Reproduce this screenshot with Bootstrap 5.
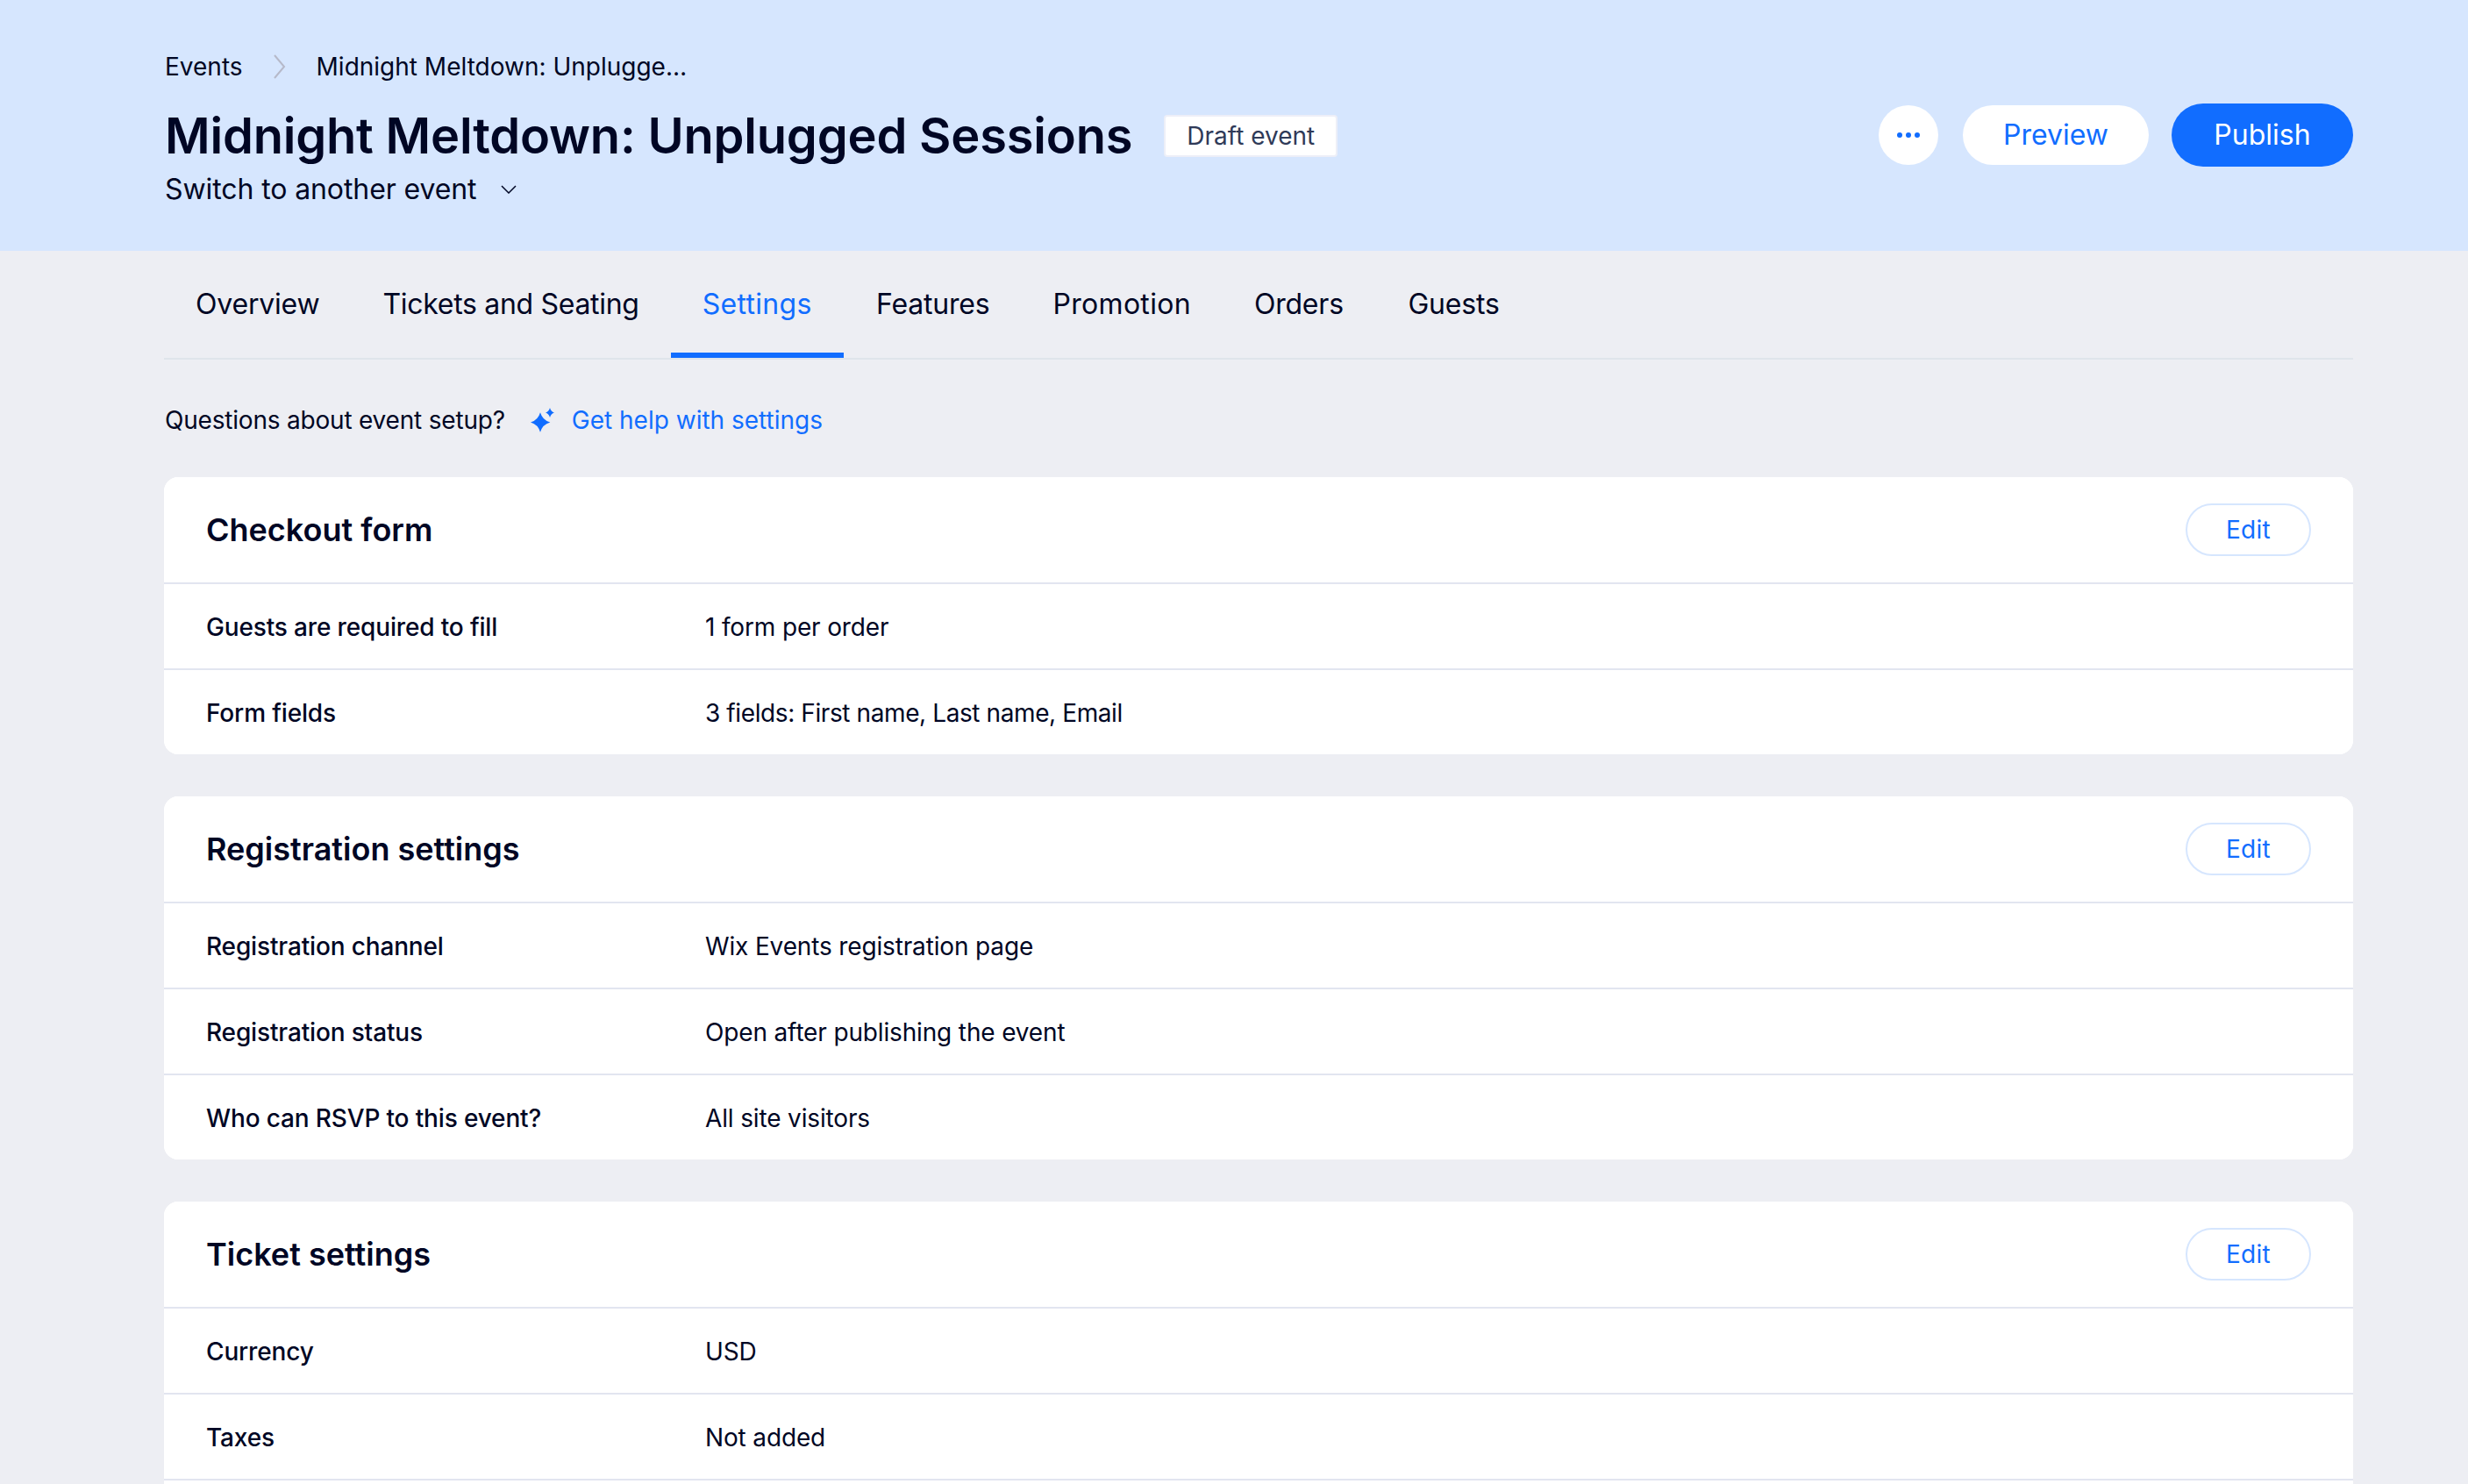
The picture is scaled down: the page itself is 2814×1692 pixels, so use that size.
<!DOCTYPE html>
<html lang="en">
<head>
<meta charset="utf-8">
<title>Midnight Meltdown: Unplugged Sessions</title>
<link href="https://cdn.jsdelivr.net/npm/bootstrap@5.3.0/dist/css/bootstrap.min.css" rel="stylesheet">
<style>
html, body { height: 100%; overflow: hidden; }
body { background: #edeef3; color: #000624; font-family: Inter, "Noto Sans", sans-serif; font-size: 28px; }
.top-band { background: #d6e6fe; height: 286px; padding: 56px 131px 0 188px; }
.crumbs { font-size: 28px; line-height: 40px; margin-bottom: 0; gap: 35px; }
.crumb-chev { width: 14px; height: 28px; }
.title-line { margin-top: 20px; gap: 36px; }
.page-title { font-size: 56px; line-height: 78px; font-weight: 600; margin: 0; letter-spacing: -.2px; color: #000624; }
.draft-tag { background: #fff; height: 48px; width: 198px; font-size: 28px; border: 2px solid #edeff8; border-radius: 4px; color: #2f3a58; }
.switch-btn { font-size: 32px; line-height: 44px; color: #000624; padding: 0; border: 0; gap: 28px; letter-spacing: -.1px; }
.switch-chev { margin-top: 0; }
.head-actions { gap: 26px; margin-top: 62px; }
.dots-btn { width: 68px; height: 68px; padding: 0; background: #fff; border: 0; margin-right: 2px; }
.ghost-btn { background: #fff; border: 0; color: #116dff; width: 212px; height: 68px; font-size: 32px; padding: 0; }
.solid-btn { background: #116dff; border: 0; color: #fff; width: 207px; height: 72px; font-size: 32px; padding: 0; }
.page-body { padding: 0 131px 0 187px; }
.tab-strip { border-bottom: 2px solid #dfe5eb; height: 124px; gap: 0; flex-wrap: nowrap; }
.tab-strip .nav-link { color: #000624; font-size: 32px; line-height: 122px; height: 122px; padding: 0 36px; border-bottom: 6px solid transparent; letter-spacing: -.2px; }
.tab-strip .nav-link.active { color: #116dff; border-bottom-color: #116dff; }
.tab-strip .tab-airy { letter-spacing: .3px; }
.tab-strip .tab-snug { letter-spacing: -.3px; }
.tab-strip .tab-shift { padding-left: 37.500px; }
.help-line { height: 134px; margin-bottom: 0; font-size: 28px; gap: 0; padding-top: 4px; }
.help-text { letter-spacing: -.2px; margin-left: 1px; }
.help-star { width: 27px; height: 28px; margin: 0 20px 0 29px; }
.help-link { color: #116dff; text-decoration: none; }
.set-card { border: 0; border-radius: 16px; background: #fff; margin-bottom: 48px; overflow: hidden; }
.set-card .card-header { background: #fff; height: 122px; padding: 0 48px; border-bottom: 2px solid #e2e5f0; border-radius: 0; }
.set-title { font-size: 36px; font-weight: 600; margin: 0; padding-top: 2px; color: #000624; }
.edit-btn { width: 143px; height: 60px; border: 2px solid #d6e6fe; background: #fff; color: #116dff; font-size: 28px; padding: 0; letter-spacing: .3px; }
.set-rows .list-group-item { height: 98px; padding: 1px 48px 0; border-color: #e2e5f0; border-width: 0 0 2px; color: #000624; font-size: 28px; letter-spacing: -.15px; }
.set-rows .list-group-item:last-child { border-bottom-width: 0; height: 96px; }
.row-key { width: 569px; font-weight: 500; }
.val-snug { letter-spacing: -.4px; }
</style>
</head>
<body>
<header class="top-band">
  <div class="d-flex justify-content-between align-items-start">
    <div>
      <nav class="d-flex align-items-center crumbs">
        <span>Events</span>
        <svg class="crumb-chev" viewBox="0 0 14 28" fill="none" stroke="#b6b9c9" stroke-width="2"><path d="M1 1l11 13L1 27"/></svg>
        <span>Midnight Meltdown: Unplugge…</span>
      </nav>
      <div class="d-flex align-items-center title-line">
        <h1 class="page-title">Midnight Meltdown: Unplugged Sessions</h1>
        <span class="draft-tag d-inline-flex align-items-center justify-content-center">Draft event</span>
      </div>
      <button class="btn switch-btn d-flex align-items-center" type="button">Switch to another event
        <svg class="switch-chev" width="18" height="10" viewBox="0 0 18 10" fill="none" stroke="#000624" stroke-width="1.500"><path d="M1 1l8 8 8-8"/></svg>
      </button>
    </div>
    <div class="d-flex align-items-center head-actions">
      <button class="btn dots-btn rounded-circle d-flex align-items-center justify-content-center" type="button" aria-label="More">
        <svg width="26" height="6" viewBox="0 0 26 6" fill="#116dff"><circle cx="3" cy="3" r="3"/><circle cx="13" cy="3" r="3"/><circle cx="23" cy="3" r="3"/></svg>
      </button>
      <button class="btn ghost-btn rounded-pill" type="button">Preview</button>
      <button class="btn solid-btn rounded-pill" type="button">Publish</button>
    </div>
  </div>
</header>
<main class="page-body">
  <ul class="nav tab-strip">
    <li class="nav-item"><a class="nav-link" href="#">Overview</a></li>
    <li class="nav-item"><a class="nav-link tab-snug" href="#">Tickets and Seating</a></li>
    <li class="nav-item"><a class="nav-link active tab-airy" href="#">Settings</a></li>
    <li class="nav-item"><a class="nav-link tab-shift" href="#">Features</a></li>
    <li class="nav-item"><a class="nav-link tab-airy" href="#">Promotion</a></li>
    <li class="nav-item"><a class="nav-link" href="#">Orders</a></li>
    <li class="nav-item"><a class="nav-link tab-shift" href="#">Guests</a></li>
  </ul>
  <div class="d-flex align-items-center help-line">
    <span class="help-text">Questions about event setup?</span>
    <svg class="help-star" viewBox="0 0 27 28" fill="#116dff"><path d="M11 5.200Q13.500 14 22.300 16.500 13.500 19 11 27.800 8.500 19 0 16.500 8.500 14 11 5.200z"/><path d="M22 0Q23.200 4.300 27 5.500 23.200 6.700 22 11 20.800 6.700 17 5.500 20.800 4.300 22 0z"/></svg>
    <a class="help-link" href="#">Get help with settings</a>
  </div>

  <section class="card set-card">
    <div class="card-header d-flex justify-content-between align-items-center">
      <h2 class="set-title">Checkout form</h2>
      <button class="btn edit-btn rounded-pill" type="button">Edit</button>
    </div>
    <div class="list-group list-group-flush set-rows">
      <div class="list-group-item d-flex align-items-center"><span class="row-key">Guests are required to fill</span><span>1 form per order</span></div>
      <div class="list-group-item d-flex align-items-center"><span class="row-key">Form fields</span><span class="val-snug">3 fields: First name, Last name, Email</span></div>
    </div>
  </section>

  <section class="card set-card">
    <div class="card-header d-flex justify-content-between align-items-center">
      <h2 class="set-title">Registration settings</h2>
      <button class="btn edit-btn rounded-pill" type="button">Edit</button>
    </div>
    <div class="list-group list-group-flush set-rows">
      <div class="list-group-item d-flex align-items-center"><span class="row-key">Registration channel</span><span>Wix Events registration page</span></div>
      <div class="list-group-item d-flex align-items-center"><span class="row-key">Registration status</span><span>Open after publishing the event</span></div>
      <div class="list-group-item d-flex align-items-center"><span class="row-key">Who can RSVP to this event?</span><span>All site visitors</span></div>
    </div>
  </section>

  <section class="card set-card">
    <div class="card-header d-flex justify-content-between align-items-center">
      <h2 class="set-title">Ticket settings</h2>
      <button class="btn edit-btn rounded-pill" type="button">Edit</button>
    </div>
    <div class="list-group list-group-flush set-rows">
      <div class="list-group-item d-flex align-items-center"><span class="row-key">Currency</span><span>USD</span></div>
      <div class="list-group-item d-flex align-items-center"><span class="row-key">Taxes</span><span>Not added</span></div>
      <div class="list-group-item"></div>
    </div>
  </section>
</main>
<script src="https://cdn.jsdelivr.net/npm/bootstrap@5.3.0/dist/js/bootstrap.bundle.min.js"></script>
</body>
</html>
